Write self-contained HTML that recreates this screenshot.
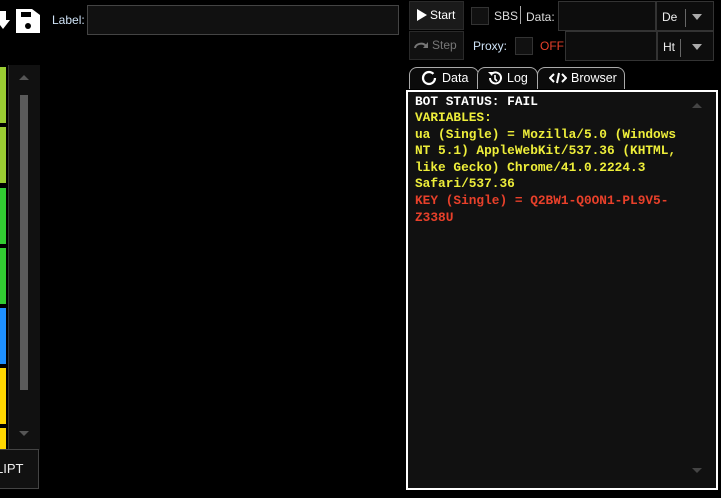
<!DOCTYPE html><html><head><style>
body{margin:0;width:721px;height:498px;background:#000;position:relative;overflow:hidden;font-family:"Liberation Sans",sans-serif;color:#ddd;font-size:12px}
div{position:absolute;box-sizing:border-box}
.blk{left:0;width:6px;height:56px}
.btn{background:#1a1a1a;border:1px solid #2a2a2a}
.inp{background:#111;border:1px solid #444}
.tab{top:67px;height:22px;background:#0b0b0b;border:1px solid #aaa;border-bottom:none;border-radius:8px 8px 0 0;color:#fff;font-size:12.5px;line-height:20px}
.mono{font-family:"Liberation Mono",monospace;font-size:12.8px;line-height:16.5px;white-space:pre;font-weight:bold}
</style></head><body>
<svg style="position:absolute;left:0;top:5px" width="42" height="30"><path d="M0 6h6v9h4l-7 9-3-4z" fill="#fff"/><path d="M16 4h16l8 6v18H16z" fill="#fff"/><rect x="21" y="7" width="10" height="5" fill="#000"/><circle cx="28" cy="21" r="3" fill="#000"/></svg>
<div style="left:52px;top:13px;color:#cfe3f7">Label:</div>
<div class="inp" style="left:87px;top:5px;width:312px;height:30px"></div>
<div style="left:0;top:65px;width:40px;height:385px;background:#111"></div>
<div style="left:0;top:65px;width:9px;height:385px;background:#000;border-right:1px solid #333"></div>
<div class="blk" style="top:67px;background:#9acd32"></div>
<div class="blk" style="top:127px;background:#9acd32"></div>
<div class="blk" style="top:188px;background:#32cd32"></div>
<div class="blk" style="top:248px;background:#32cd32"></div>
<div class="blk" style="top:308px;background:#1e90ff"></div>
<div class="blk" style="top:368px;background:#ffd700"></div>
<div class="blk" style="top:428px;background:#ffd700"></div>
<div style="left:19px;top:75px;width:0;height:0;border:5px solid transparent;border-bottom-color:#555;border-top:none"></div>
<div style="left:20px;top:95px;width:8px;height:295px;background:#5a5a5a"></div>
<div style="left:19px;top:431px;width:0;height:0;border:5px solid transparent;border-top-color:#555;border-bottom:none"></div>
<div style="left:-5px;top:449px;width:44px;height:40px;background:#111;border:1px solid #444;line-height:38px;color:#eee;font-size:13px">LIPT</div>

<div class="btn" style="left:409px;top:1px;width:55px;height:29px;color:#fff;line-height:27px;padding-left:20px">Start</div>
<svg style="position:absolute;left:416px;top:8px" width="12" height="14"><path d="M1 1l10 6-10 6z" fill="#fff"/></svg>
<div class="btn" style="left:409px;top:31px;width:55px;height:29px;color:#777;line-height:27px;padding-left:22px;background:#111">Step</div>
<svg style="position:absolute;left:413px;top:39px" width="16" height="12"><path d="M2 9a6 5 0 0 1 11-2" stroke="#777" stroke-width="2" fill="none"/><path d="M15 3v6h-5z" fill="#777"/></svg>
<div class="inp" style="left:471px;top:7px;width:18px;height:18px;background:#111;border-color:#333"></div>
<div style="left:494px;top:9px;color:#ddd">SBS</div>
<div style="left:520px;top:6px;width:1px;height:18px;background:#aaa"></div>
<div style="left:526px;top:10px;color:#ddd">Data:</div>
<div class="inp" style="left:558px;top:1px;width:98px;height:30px;background:#0d0d0d;border-color:#333"></div>
<div class="inp" style="left:656px;top:1px;width:58px;height:30px;background:#0d0d0d;border-color:#333;color:#eee;padding:7px 0 0 5px">De<span style="display:inline-block;width:1px;height:18px;background:#666;margin-left:8px;vertical-align:middle"></span></div>
<div style="left:692px;top:14px;border:5px solid transparent;border-top:6px solid #aaa;border-bottom:none"></div>
<div style="left:473px;top:39px;color:#cfe3f7">Proxy:</div>
<div class="inp" style="left:515px;top:37px;width:18px;height:18px;border-color:#333"></div>
<div style="left:540px;top:39px;color:#e8402a">OFF</div>
<div class="inp" style="left:565px;top:31px;width:92px;height:30px;background:#0d0d0d;border-color:#333"></div>
<div class="inp" style="left:657px;top:31px;width:57px;height:30px;background:#0d0d0d;border-color:#333;color:#eee;padding:7px 0 0 5px">Ht<span style="display:inline-block;width:1px;height:18px;background:#666;margin-left:5px;vertical-align:middle"></span></div>
<div style="left:692px;top:44px;border:5px solid transparent;border-top:6px solid #aaa;border-bottom:none"></div>

<div class="tab" style="left:409px;width:70px;padding-left:32px">Data</div>
<svg style="position:absolute;left:421px;top:70px" width="16" height="16"><circle cx="8" cy="8" r="6" stroke="#fff" stroke-width="2.2" fill="none" stroke-dasharray="33 5"/></svg>
<div class="tab" style="left:477px;width:61px;padding-left:29px">Log</div>
<svg style="position:absolute;left:487px;top:70px" width="16" height="16"><path d="M3 8a5.5 5.5 0 1 0 2-4.3" stroke="#fff" stroke-width="2" fill="none"/><path d="M1 2l5 0-1 4z" fill="#fff"/><path d="M8 5v4l2 2" stroke="#fff" stroke-width="1.6" fill="none"/></svg>
<div class="tab" style="left:537px;width:88px;padding-left:33px">Browser</div>
<svg style="position:absolute;left:549px;top:72px" width="18" height="12"><path d="M5 2L1 6l4 4M13 2l4 4-4 4M10 1L8 11" stroke="#fff" stroke-width="2" fill="none"/></svg>
<div style="left:406px;top:90px;width:312px;height:400px;background:#111;border:2px solid #fff"></div>
<div style="left:692px;top:103px;border:5px solid transparent;border-bottom:5px solid #444;border-top:none"></div>
<div style="left:692px;top:468px;border:5px solid transparent;border-top:5px solid #444;border-bottom:none"></div>
<div class="mono" style="left:415px;top:94px;color:#fff">BOT STATUS: FAIL</div>
<div class="mono" style="left:415px;top:110px;color:#eeee3a">VARIABLES:
ua (Single) = Mozilla/5.0 (Windows
NT 5.1) AppleWebKit/537.36 (KHTML,
like Gecko) Chrome/41.0.2224.3
Safari/537.36</div>
<div class="mono" style="left:415px;top:193px;color:#e8402a">KEY (Single) = Q2BW1-Q0ON1-PL9V5-
Z338U</div>
</body></html>
